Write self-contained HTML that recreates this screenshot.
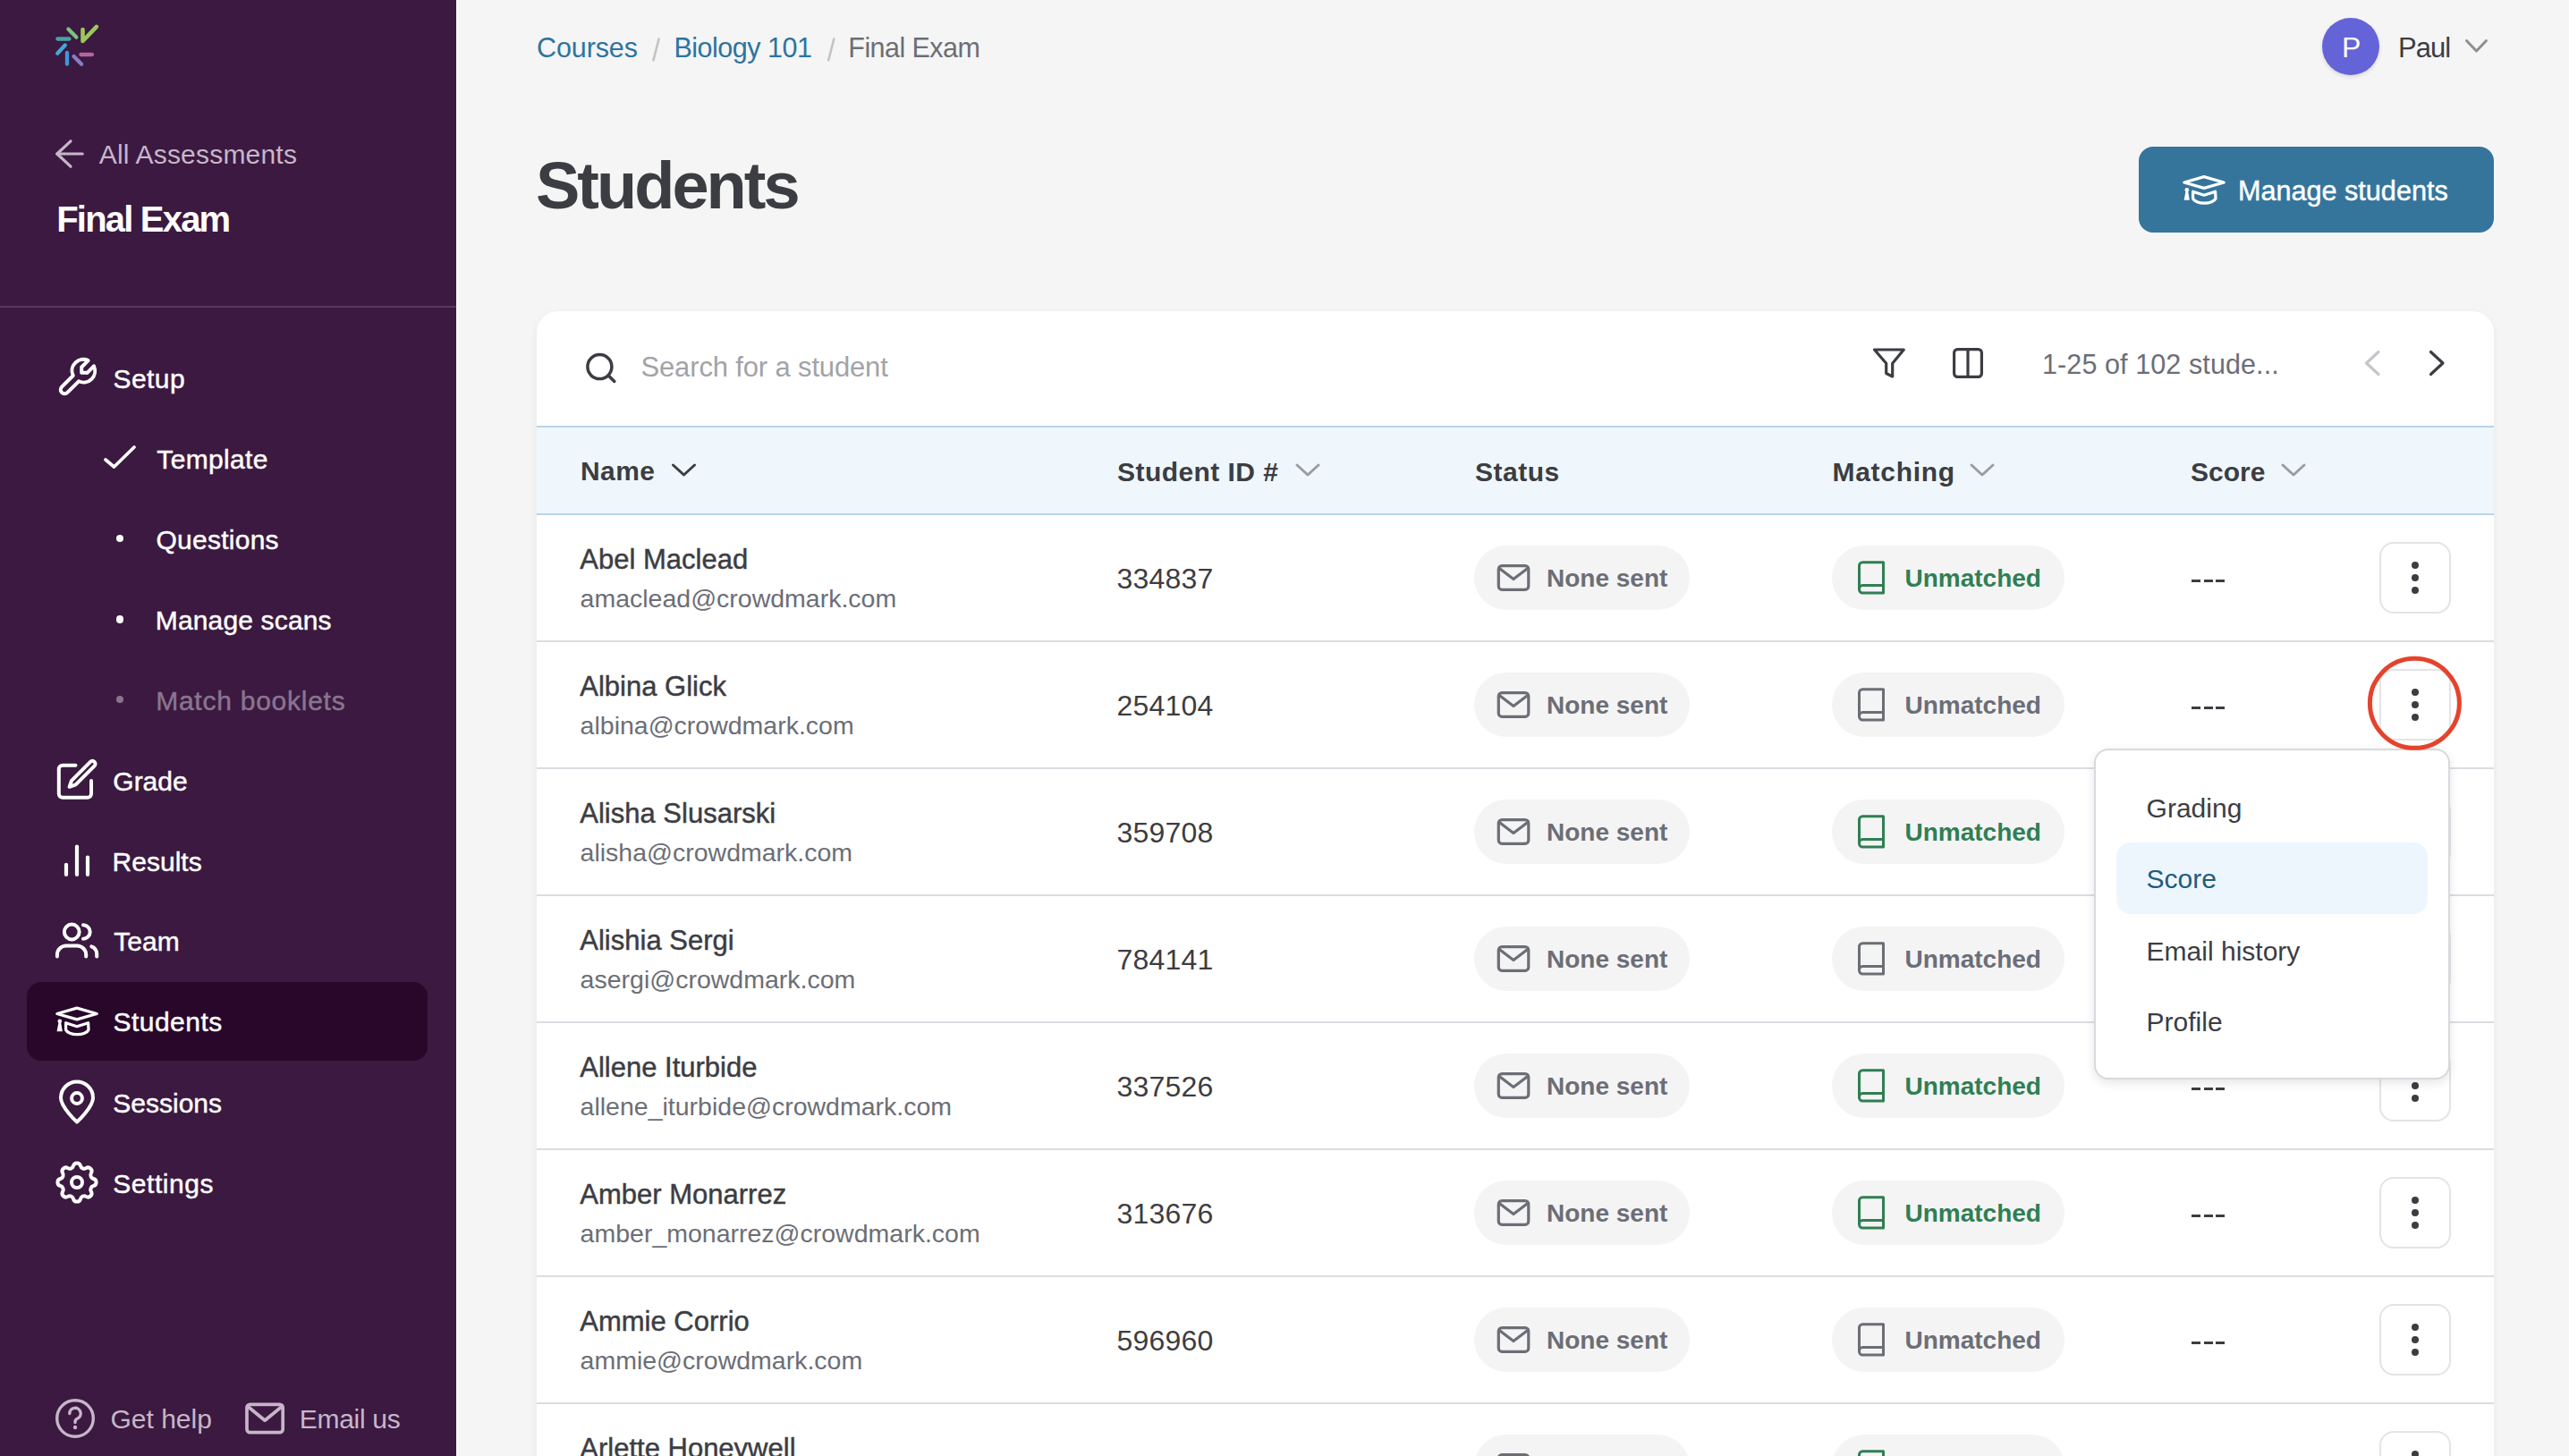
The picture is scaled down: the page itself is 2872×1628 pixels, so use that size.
<!DOCTYPE html>
<html><head><meta charset="utf-8">
<style>
*{margin:0;padding:0;box-sizing:border-box}
html,body{width:2872px;height:1628px;overflow:hidden;background:#f5f5f5;font-family:"Liberation Sans",sans-serif;color:#3c3d42}
.a{position:absolute;white-space:nowrap;line-height:1}
svg{position:absolute;overflow:visible}
.b{position:absolute}
</style></head><body>
<div class="b" style="left:0;top:0;width:510px;height:1628px;background:#3b1940"></div>
<svg style="left:0px;top:0px" width="200" height="100" viewBox="0 0 200 100" ><g stroke-linecap="round" fill="none" stroke-width="4.3">
<line x1="76.4" y1="32.5" x2="85.3" y2="41.6" stroke="#79c27c"/>
<polyline points="92.5,33 92.5,46 107.9,29.9" stroke="#9cc75a" stroke-linejoin="round" stroke-width="4.6"/>
<line x1="64.4" y1="43.5" x2="77.4" y2="43.5" stroke="#48a4a0"/>
<line x1="72.8" y1="50.5" x2="64.2" y2="59.7" stroke="#45a8d6"/>
<line x1="75" y1="59" x2="75" y2="71.7" stroke="#3f98da"/>
<line x1="82.5" y1="63" x2="91.1" y2="71.7" stroke="#8a7dc2"/>
<line x1="90.4" y1="61" x2="102.9" y2="61" stroke="#b564a2"/>
</g></svg>
<svg style="left:62px;top:156px" width="32" height="32" viewBox="0 0 32 32" ><g fill="none" stroke="#c7b6ca" stroke-width="3.2" stroke-linecap="round" stroke-linejoin="round"><polyline points="17,1.8 1.8,16 17,30.2"/><line x1="1.8" y1="16" x2="30.2" y2="16"/></g></svg>
<div class="a" style="left:110.7px;top:157.60px;font-size:30px;color:#c7b6ca;letter-spacing:0.2px;">All Assessments</div>
<div class="a" style="left:63.2px;top:225.14px;font-size:40px;color:#ffffff;font-weight:bold;letter-spacing:-1.8px;">Final Exam</div>
<div class="b" style="left:0;top:342px;width:510px;height:2px;background:#563a5b"></div>
<svg style="left:0px;top:0px" width="10" height="10" viewBox="0 0 10 10" ><g transform="translate(112.3,395.7) scale(-2.11,2.11)" fill="none" stroke="#ffffff" stroke-width="1.9" stroke-linecap="round" stroke-linejoin="round"><path d="M7 10h3v-3l-3.5 -3.5a6 6 0 0 1 8 8l6 6a2 2 0 0 1 -3 3l-6 -6a6 6 0 0 1 -8 -8l3.5 3.5"/></g></svg>
<div class="a" style="left:126.6px;top:408.61px;font-size:30px;color:#ffffff;letter-spacing:0.4px;-webkit-text-stroke:0.45px #ffffff;">Setup</div>
<svg style="left:116px;top:498px" width="36" height="26" viewBox="0 0 36 26" ><polyline points="2,16 11.5,24 34,2" fill="none" stroke="#ffffff" stroke-width="3.6" stroke-linecap="round" stroke-linejoin="round"/></svg>
<div class="a" style="left:175.3px;top:498.81px;font-size:30px;color:#ffffff;letter-spacing:0.35px;-webkit-text-stroke:0.45px #ffffff;">Template</div>
<div class="b" style="left:129.7px;top:597.9000000000001px;width:8.6px;height:8.6px;border-radius:50%;background:#ffffff"></div>
<div class="b" style="left:129.7px;top:688.1px;width:8.6px;height:8.6px;border-radius:50%;background:#ffffff"></div>
<div class="b" style="left:129.7px;top:777.9000000000001px;width:8.6px;height:8.6px;border-radius:50%;background:#8a7590"></div>
<div class="a" style="left:174.5px;top:588.61px;font-size:30px;color:#ffffff;letter-spacing:0.25px;-webkit-text-stroke:0.45px #ffffff;">Questions</div>
<div class="a" style="left:173.8px;top:678.81px;font-size:30px;color:#ffffff;letter-spacing:0.15px;-webkit-text-stroke:0.45px #ffffff;">Manage scans</div>
<div class="a" style="left:174.2px;top:768.61px;font-size:30px;color:#8a7590;letter-spacing:0.75px;-webkit-text-stroke:0.45px #8a7590;">Match booklets</div>
<svg style="left:0px;top:0px" width="10" height="10" viewBox="0 0 10 10" ><g fill="none" stroke="#ffffff" stroke-width="4" stroke-linecap="round" stroke-linejoin="round"><path d="M84.5 855.7H70a4.2 4.2 0 0 0-4.2 4.2V887.6a4.2 4.2 0 0 0 4.2 4.2H97.8a4.2 4.2 0 0 0 4.2-4.2V873"/><path d="M101 851.8a3.25 3.25 0 0 1 4.6 4.6L84.6 877.4L77.6 879.8L80 872.8Z"/></g></svg>
<div class="a" style="left:126.3px;top:858.61px;font-size:30px;color:#ffffff;-webkit-text-stroke:0.45px #ffffff;">Grade</div>
<svg style="left:0px;top:0px" width="10" height="10" viewBox="0 0 10 10" ><g fill="none" stroke="#ffffff" stroke-width="4.2" stroke-linecap="round"><line x1="74" y1="966.8" x2="74" y2="978"/><line x1="86" y1="946.5" x2="86" y2="978"/><line x1="98" y1="958.5" x2="98" y2="978"/></g></svg>
<div class="a" style="left:125.6px;top:948.81px;font-size:30px;color:#ffffff;-webkit-text-stroke:0.45px #ffffff;">Results</div>
<svg style="left:0px;top:0px" width="10" height="10" viewBox="0 0 10 10" ><g fill="none" stroke="#ffffff" stroke-width="4" stroke-linecap="round"><circle cx="80.25" cy="1042" r="8.4"/><path d="M93 1034.3a7.7 7.7 0 0 1 0 15.4"/><path d="M63.9 1069.6v-2a10 10 0 0 1 10-10h12.3a10 10 0 0 1 10 10v2"/><path d="M102.3 1058.3a9 9 0 0 1 5.9 8.3v3"/></g></svg>
<div class="a" style="left:127.3px;top:1038.20px;font-size:30px;color:#ffffff;-webkit-text-stroke:0.45px #ffffff;">Team</div>
<div class="b" style="left:30px;top:1098px;width:448px;height:88px;border-radius:16px;background:#28072b"></div>
<svg style="left:0px;top:0px" width="10" height="10" viewBox="0 0 10 10" ><g transform="translate(62,1125.5) scale(1.0)"><path d="M1.8 8L24 1.6L46.2 8L24 14.4Z" fill="none" stroke="#ffffff" stroke-width="3.2" stroke-linejoin="round"/><path d="M11.6 18.2L24 22.2L36.6 18.2L37 26A13 6.5 0 0 1 11.6 26Z" fill="none" stroke="#ffffff" stroke-width="3.2" stroke-linejoin="round"/><circle cx="4.8" cy="16.2" r="2.3" fill="#ffffff"/><path d="M3.6 17L6 17L7.8 27.8L1.6 27.8Z" fill="#ffffff"/></g></svg>
<div class="a" style="left:126.4px;top:1128.31px;font-size:30px;color:#ffffff;letter-spacing:0.5px;-webkit-text-stroke:0.45px #ffffff;">Students</div>
<svg style="left:0px;top:0px" width="10" height="10" viewBox="0 0 10 10" ><g fill="none" stroke="#ffffff" stroke-width="4" stroke-linejoin="round"><path d="M86 1254.5C86 1254.5 68 1238 68 1227.5a18 18 0 0 1 36 0C104 1238 86 1254.5 86 1254.5Z"/><circle cx="86" cy="1228" r="5.9"/></g></svg>
<div class="a" style="left:126.3px;top:1218.61px;font-size:30px;color:#ffffff;-webkit-text-stroke:0.45px #ffffff;">Sessions</div>
<svg style="left:0px;top:0px" width="10" height="10" viewBox="0 0 10 10" ><g transform="translate(57.2,1293.2) scale(2.4)" fill="none" stroke="#ffffff" stroke-width="1.67" stroke-linecap="round" stroke-linejoin="round"><path d="M10.325 4.317c.426 -1.756 2.924 -1.756 3.35 0a1.724 1.724 0 0 0 2.573 1.066c1.543 -.94 3.31 .826 2.37 2.37a1.724 1.724 0 0 0 1.065 2.572c1.756 .426 1.756 2.924 0 3.35a1.724 1.724 0 0 0 -1.066 2.573c.94 1.543 -.826 3.31 -2.37 2.37a1.724 1.724 0 0 0 -2.572 1.065c-.426 1.756 -2.924 1.756 -3.35 0a1.724 1.724 0 0 0 -2.573 -1.066c-1.543 .94 -3.31 -.826 -2.37 -2.37a1.724 1.724 0 0 0 -1.065 -2.572c-1.756 -.426 -1.756 -2.924 0 -3.35a1.724 1.724 0 0 0 1.066 -2.573c-.94 -1.543 .826 -3.31 2.37 -2.37c1 .608 2.296 .07 2.572 -1.065z"/><circle cx="12" cy="12" r="2.5"/></g></svg>
<div class="a" style="left:126.3px;top:1308.81px;font-size:30px;color:#ffffff;letter-spacing:0.55px;-webkit-text-stroke:0.45px #ffffff;">Settings</div>
<svg style="left:0px;top:0px" width="10" height="10" viewBox="0 0 10 10" ><g fill="none" stroke="#c7b6ca" stroke-width="3.4" stroke-linecap="round"><circle cx="84" cy="1586" r="20.3"/><path d="M77.8 1580.5a6.2 6.2 0 1 1 8.6 5.7c-1.6.8-2.4 1.8-2.4 3.4v0.9"/></g><circle cx="84" cy="1596" r="2.2" fill="#c7b6ca"/></svg>
<div class="a" style="left:123.5px;top:1572.40px;font-size:30px;color:#c7b6ca;">Get help</div>
<svg style="left:0px;top:0px" width="10" height="10" viewBox="0 0 10 10" ><g fill="none" stroke="#c7b6ca" stroke-width="3.7" stroke-linejoin="round" stroke-linecap="round"><rect x="276" y="1570.3" width="40.2" height="31.4" rx="3.5"/><polyline points="277.5,1573 296.1,1588.2 314.7,1573"/></g></svg>
<div class="a" style="left:334.8px;top:1572.40px;font-size:30px;color:#c7b6ca;letter-spacing:-0.3px;">Email us</div>
<div class="a" style="left:600px;top:38.18px;font-size:30.5px;color:#2d74a0;letter-spacing:-0.1px;">Courses</div>
<svg style="left:0px;top:0px" width="10" height="10" viewBox="0 0 10 10" ><line x1="736.6" y1="43.5" x2="730.5" y2="67.3" stroke="#c2c3c7" stroke-width="2.6" stroke-linecap="round"/></svg>
<div class="a" style="left:753.5px;top:38.18px;font-size:30.5px;color:#2d74a0;letter-spacing:-0.5px;">Biology 101</div>
<svg style="left:0px;top:0px" width="10" height="10" viewBox="0 0 10 10" ><line x1="932.3" y1="43.5" x2="926.2" y2="67.3" stroke="#c2c3c7" stroke-width="2.6" stroke-linecap="round"/></svg>
<div class="a" style="left:948.3px;top:38.18px;font-size:30.5px;color:#6c6e76;letter-spacing:-0.55px;">Final Exam</div>
<div class="a" style="left:599px;top:170.86px;font-size:74px;color:#3c3d42;font-weight:bold;letter-spacing:-3px;">Students</div>
<div class="b" style="left:2596px;top:20px;width:64px;height:64px;border-radius:50%;background:#6464d8;box-shadow:0 2px 4px rgba(0,0,0,0.12)"></div>
<div class="a" style="left:2618px;top:36.91px;font-size:32px;color:#ffffff;">P</div>
<div class="a" style="left:2681px;top:38.36px;font-size:31px;color:#3c3d42;letter-spacing:-1px;">Paul</div>
<svg style="left:2756px;top:44px" width="26" height="16" viewBox="0 0 26 16" ><polyline points="1.5,1.5 12.5,13 23.5,1.5" fill="none" stroke="#8e8f94" stroke-width="3" stroke-linecap="round" stroke-linejoin="round"/></svg>
<div class="b" style="left:2391px;top:164px;width:397px;height:96px;border-radius:16px;background:#35759c"></div>
<svg style="left:0px;top:0px" width="10" height="10" viewBox="0 0 10 10" ><g transform="translate(2440,196) scale(1.0)"><path d="M1.8 8L24 1.6L46.2 8L24 14.4Z" fill="none" stroke="#ffffff" stroke-width="3.2" stroke-linejoin="round"/><path d="M11.6 18.2L24 22.2L36.6 18.2L37 26A13 6.5 0 0 1 11.6 26Z" fill="none" stroke="#ffffff" stroke-width="3.2" stroke-linejoin="round"/><circle cx="4.8" cy="16.2" r="2.3" fill="#ffffff"/><path d="M3.6 17L6 17L7.8 27.8L1.6 27.8Z" fill="#ffffff"/></g></svg>
<div class="a" style="left:2502px;top:198.10px;font-size:30.6px;color:#ffffff;-webkit-text-stroke:0.45px #ffffff;">Manage students</div>
<div class="b" style="left:600px;top:348px;width:2188px;height:1400px;border-radius:24px;background:#fff;box-shadow:0 3px 10px rgba(0,0,0,0.06)"></div>
<svg style="left:0px;top:0px" width="10" height="10" viewBox="0 0 10 10" ><g fill="none" stroke="#3c3d42" stroke-width="3.5" stroke-linecap="round"><circle cx="670.4" cy="410.1" r="13.5"/><line x1="680.3" y1="420" x2="686.8" y2="426.5"/></g></svg>
<div class="a" style="left:716.5px;top:395.46px;font-size:31px;color:#a2a3a7;letter-spacing:-0.15px;">Search for a student</div>
<svg style="left:0px;top:0px" width="10" height="10" viewBox="0 0 10 10" ><path d="M2095.5 391L2128.3 391L2115.7 406.2L2115.7 421L2108.7 417.5L2108.7 406.2Z" fill="none" stroke="#3c3d42" stroke-width="3.2" stroke-linejoin="round"/></svg>
<svg style="left:0px;top:0px" width="10" height="10" viewBox="0 0 10 10" ><g fill="none" stroke="#3c3d42" stroke-width="3.2"><rect x="2184.6" y="390.6" width="30.8" height="30.8" rx="3.8"/><line x1="2200" y1="391" x2="2200" y2="421"/></g></svg>
<div class="a" style="left:2283px;top:392.48px;font-size:30.5px;color:#6c6e76;letter-spacing:0.1px;">1-25 of 102 stude...</div>
<svg style="left:0px;top:0px" width="10" height="10" viewBox="0 0 10 10" ><polyline points="2659,393.5 2645.5,406 2659,418.5" fill="none" stroke="#c5c6ca" stroke-width="3.2" stroke-linecap="round" stroke-linejoin="round"/></svg>
<svg style="left:0px;top:0px" width="10" height="10" viewBox="0 0 10 10" ><polyline points="2717.5,393.5 2731,406 2717.5,418.5" fill="none" stroke="#3c3d42" stroke-width="3.2" stroke-linecap="round" stroke-linejoin="round"/></svg>
<div class="b" style="left:600px;top:476px;width:2188px;height:100px;background:#eff7fd;border-top:2px solid #b7d6e7;border-bottom:2px solid #b7d6e7"></div>
<div class="a" style="left:649px;top:512.40px;font-size:30px;color:#3c3d42;font-weight:bold;letter-spacing:0.4px;">Name</div>
<svg style="left:0px;top:0px" width="10" height="10" viewBox="0 0 10 10" ><polyline points="752.5,520.0 764.5,531.0 776.5,520.0" fill="none" stroke="#3c3d42" stroke-width="3" stroke-linecap="round" stroke-linejoin="round"/></svg>
<div class="a" style="left:1249px;top:512.61px;font-size:30px;color:#3c3d42;font-weight:bold;letter-spacing:0.45px;">Student ID #</div>
<svg style="left:0px;top:0px" width="10" height="10" viewBox="0 0 10 10" ><polyline points="1450.0,520.0 1462.0,531.0 1474.0,520.0" fill="none" stroke="#9b9ca0" stroke-width="3" stroke-linecap="round" stroke-linejoin="round"/></svg>
<div class="a" style="left:1649px;top:512.61px;font-size:30px;color:#3c3d42;font-weight:bold;letter-spacing:0.5px;">Status</div>
<div class="a" style="left:2048.5px;top:512.61px;font-size:30px;color:#3c3d42;font-weight:bold;letter-spacing:0.7px;">Matching</div>
<svg style="left:0px;top:0px" width="10" height="10" viewBox="0 0 10 10" ><polyline points="2204.0,520.0 2216.0,531.0 2228.0,520.0" fill="none" stroke="#9b9ca0" stroke-width="3" stroke-linecap="round" stroke-linejoin="round"/></svg>
<div class="a" style="left:2449px;top:512.61px;font-size:30px;color:#3c3d42;font-weight:bold;">Score</div>
<svg style="left:0px;top:0px" width="10" height="10" viewBox="0 0 10 10" ><polyline points="2552.0,520.0 2564.0,531.0 2576.0,520.0" fill="none" stroke="#9b9ca0" stroke-width="3" stroke-linecap="round" stroke-linejoin="round"/></svg>
<div class="b" style="left:600px;top:716px;width:2188px;height:2px;background:#dcdde2"></div>
<div class="a" style="left:648.3px;top:609.56px;font-size:31px;color:#3c3d42;-webkit-text-stroke:0.45px #3c3d42;">Abel Maclead</div>
<div class="a" style="left:648.6px;top:655.37px;font-size:28.5px;color:#6c6e76;">amaclead@crowdmark.com</div>
<div class="a" style="left:1248.5px;top:630.91px;font-size:32px;color:#3c3d42;letter-spacing:0.2px;">334837</div>
<div class="b" style="left:1648px;top:610px;width:241px;height:72px;border-radius:36px;background:#f4f4f5"></div>
<svg style="left:0px;top:0px" width="10" height="10" viewBox="0 0 10 10" ><g fill="none" stroke="#6c6e76" stroke-width="3.2" stroke-linejoin="round"><rect x="1675.3" y="632.6" width="33.5" height="26.7" rx="3.8"/><polyline points="1676.2,635.6 1692,647.6 1707.8,635.6"/></g></svg>
<div class="a" style="left:1729px;top:632.50px;font-size:28px;color:#6c6e76;font-weight:bold;">None sent</div>
<div class="b" style="left:2048px;top:610px;width:260px;height:72px;border-radius:36px;background:#f4f4f5"></div>
<svg style="left:0px;top:0px" width="10" height="10" viewBox="0 0 10 10" ><g fill="none" stroke="#2f7f52" stroke-width="3" stroke-linejoin="round"><path d="M2105.5 628.7H2082.3a3.8 3.8 0 0 0 -3.8 3.8V659.3a3.8 3.8 0 0 0 3.8 3.8H2105.5Z"/><path d="M2078.5 658.3a3.8 3.8 0 0 1 3.8 -3.8H2105.5"/></g></svg>
<div class="a" style="left:2129.5px;top:632.50px;font-size:28px;color:#2f7f52;font-weight:bold;">Unmatched</div>
<div class="b" style="left:2450px;top:648px;width:10px;height:2.8px;background:#3c3d42"></div>
<div class="b" style="left:2463.5px;top:648px;width:10px;height:2.8px;background:#3c3d42"></div>
<div class="b" style="left:2477px;top:648px;width:10px;height:2.8px;background:#3c3d42"></div>
<div class="b" style="left:2660px;top:606px;width:80px;height:80px;border:2px solid #e4e4e7;border-radius:16px;background:#fff"></div>
<div class="b" style="left:2695.8px;top:627.8px;width:8.4px;height:8.4px;border-radius:50%;background:#3c3d42"></div>
<div class="b" style="left:2695.8px;top:641.8px;width:8.4px;height:8.4px;border-radius:50%;background:#3c3d42"></div>
<div class="b" style="left:2695.8px;top:655.8px;width:8.4px;height:8.4px;border-radius:50%;background:#3c3d42"></div>
<div class="b" style="left:600px;top:858px;width:2188px;height:2px;background:#dcdde2"></div>
<div class="a" style="left:648.3px;top:751.56px;font-size:31px;color:#3c3d42;-webkit-text-stroke:0.45px #3c3d42;">Albina Glick</div>
<div class="a" style="left:648.6px;top:797.37px;font-size:28.5px;color:#6c6e76;">albina@crowdmark.com</div>
<div class="a" style="left:1248.5px;top:772.91px;font-size:32px;color:#3c3d42;letter-spacing:0.2px;">254104</div>
<div class="b" style="left:1648px;top:752px;width:241px;height:72px;border-radius:36px;background:#f4f4f5"></div>
<svg style="left:0px;top:0px" width="10" height="10" viewBox="0 0 10 10" ><g fill="none" stroke="#6c6e76" stroke-width="3.2" stroke-linejoin="round"><rect x="1675.3" y="774.6" width="33.5" height="26.7" rx="3.8"/><polyline points="1676.2,777.6 1692,789.6 1707.8,777.6"/></g></svg>
<div class="a" style="left:1729px;top:774.50px;font-size:28px;color:#6c6e76;font-weight:bold;">None sent</div>
<div class="b" style="left:2048px;top:752px;width:260px;height:72px;border-radius:36px;background:#f4f4f5"></div>
<svg style="left:0px;top:0px" width="10" height="10" viewBox="0 0 10 10" ><g fill="none" stroke="#6c6e76" stroke-width="3" stroke-linejoin="round"><path d="M2105.5 770.7H2082.3a3.8 3.8 0 0 0 -3.8 3.8V801.3a3.8 3.8 0 0 0 3.8 3.8H2105.5Z"/><path d="M2078.5 800.3a3.8 3.8 0 0 1 3.8 -3.8H2105.5"/></g></svg>
<div class="a" style="left:2129.5px;top:774.50px;font-size:28px;color:#6c6e76;font-weight:bold;">Unmatched</div>
<div class="b" style="left:2450px;top:790px;width:10px;height:2.8px;background:#3c3d42"></div>
<div class="b" style="left:2463.5px;top:790px;width:10px;height:2.8px;background:#3c3d42"></div>
<div class="b" style="left:2477px;top:790px;width:10px;height:2.8px;background:#3c3d42"></div>
<div class="b" style="left:2660px;top:748px;width:80px;height:80px;border:2px solid #e4e4e7;border-radius:16px;background:#fff"></div>
<div class="b" style="left:2695.8px;top:769.8px;width:8.4px;height:8.4px;border-radius:50%;background:#3c3d42"></div>
<div class="b" style="left:2695.8px;top:783.8px;width:8.4px;height:8.4px;border-radius:50%;background:#3c3d42"></div>
<div class="b" style="left:2695.8px;top:797.8px;width:8.4px;height:8.4px;border-radius:50%;background:#3c3d42"></div>
<div class="b" style="left:600px;top:1000px;width:2188px;height:2px;background:#dcdde2"></div>
<div class="a" style="left:648.3px;top:893.56px;font-size:31px;color:#3c3d42;-webkit-text-stroke:0.45px #3c3d42;">Alisha Slusarski</div>
<div class="a" style="left:648.6px;top:939.37px;font-size:28.5px;color:#6c6e76;">alisha@crowdmark.com</div>
<div class="a" style="left:1248.5px;top:914.91px;font-size:32px;color:#3c3d42;letter-spacing:0.2px;">359708</div>
<div class="b" style="left:1648px;top:894px;width:241px;height:72px;border-radius:36px;background:#f4f4f5"></div>
<svg style="left:0px;top:0px" width="10" height="10" viewBox="0 0 10 10" ><g fill="none" stroke="#6c6e76" stroke-width="3.2" stroke-linejoin="round"><rect x="1675.3" y="916.6" width="33.5" height="26.7" rx="3.8"/><polyline points="1676.2,919.6 1692,931.6 1707.8,919.6"/></g></svg>
<div class="a" style="left:1729px;top:916.50px;font-size:28px;color:#6c6e76;font-weight:bold;">None sent</div>
<div class="b" style="left:2048px;top:894px;width:260px;height:72px;border-radius:36px;background:#f4f4f5"></div>
<svg style="left:0px;top:0px" width="10" height="10" viewBox="0 0 10 10" ><g fill="none" stroke="#2f7f52" stroke-width="3" stroke-linejoin="round"><path d="M2105.5 912.7H2082.3a3.8 3.8 0 0 0 -3.8 3.8V943.3a3.8 3.8 0 0 0 3.8 3.8H2105.5Z"/><path d="M2078.5 942.3a3.8 3.8 0 0 1 3.8 -3.8H2105.5"/></g></svg>
<div class="a" style="left:2129.5px;top:916.50px;font-size:28px;color:#2f7f52;font-weight:bold;">Unmatched</div>
<div class="b" style="left:2450px;top:932px;width:10px;height:2.8px;background:#3c3d42"></div>
<div class="b" style="left:2463.5px;top:932px;width:10px;height:2.8px;background:#3c3d42"></div>
<div class="b" style="left:2477px;top:932px;width:10px;height:2.8px;background:#3c3d42"></div>
<div class="b" style="left:2660px;top:890px;width:80px;height:80px;border:2px solid #e4e4e7;border-radius:16px;background:#fff"></div>
<div class="b" style="left:2695.8px;top:911.8px;width:8.4px;height:8.4px;border-radius:50%;background:#3c3d42"></div>
<div class="b" style="left:2695.8px;top:925.8px;width:8.4px;height:8.4px;border-radius:50%;background:#3c3d42"></div>
<div class="b" style="left:2695.8px;top:939.8px;width:8.4px;height:8.4px;border-radius:50%;background:#3c3d42"></div>
<div class="b" style="left:600px;top:1142px;width:2188px;height:2px;background:#dcdde2"></div>
<div class="a" style="left:648.3px;top:1035.56px;font-size:31px;color:#3c3d42;-webkit-text-stroke:0.45px #3c3d42;">Alishia Sergi</div>
<div class="a" style="left:648.6px;top:1081.37px;font-size:28.5px;color:#6c6e76;">asergi@crowdmark.com</div>
<div class="a" style="left:1248.5px;top:1056.91px;font-size:32px;color:#3c3d42;letter-spacing:0.2px;">784141</div>
<div class="b" style="left:1648px;top:1036px;width:241px;height:72px;border-radius:36px;background:#f4f4f5"></div>
<svg style="left:0px;top:0px" width="10" height="10" viewBox="0 0 10 10" ><g fill="none" stroke="#6c6e76" stroke-width="3.2" stroke-linejoin="round"><rect x="1675.3" y="1058.6" width="33.5" height="26.7" rx="3.8"/><polyline points="1676.2,1061.6 1692,1073.6 1707.8,1061.6"/></g></svg>
<div class="a" style="left:1729px;top:1058.50px;font-size:28px;color:#6c6e76;font-weight:bold;">None sent</div>
<div class="b" style="left:2048px;top:1036px;width:260px;height:72px;border-radius:36px;background:#f4f4f5"></div>
<svg style="left:0px;top:0px" width="10" height="10" viewBox="0 0 10 10" ><g fill="none" stroke="#6c6e76" stroke-width="3" stroke-linejoin="round"><path d="M2105.5 1054.7H2082.3a3.8 3.8 0 0 0 -3.8 3.8V1085.3a3.8 3.8 0 0 0 3.8 3.8H2105.5Z"/><path d="M2078.5 1084.3a3.8 3.8 0 0 1 3.8 -3.8H2105.5"/></g></svg>
<div class="a" style="left:2129.5px;top:1058.50px;font-size:28px;color:#6c6e76;font-weight:bold;">Unmatched</div>
<div class="b" style="left:2450px;top:1074px;width:10px;height:2.8px;background:#3c3d42"></div>
<div class="b" style="left:2463.5px;top:1074px;width:10px;height:2.8px;background:#3c3d42"></div>
<div class="b" style="left:2477px;top:1074px;width:10px;height:2.8px;background:#3c3d42"></div>
<div class="b" style="left:2660px;top:1032px;width:80px;height:80px;border:2px solid #e4e4e7;border-radius:16px;background:#fff"></div>
<div class="b" style="left:2695.8px;top:1053.8px;width:8.4px;height:8.4px;border-radius:50%;background:#3c3d42"></div>
<div class="b" style="left:2695.8px;top:1067.8px;width:8.4px;height:8.4px;border-radius:50%;background:#3c3d42"></div>
<div class="b" style="left:2695.8px;top:1081.8px;width:8.4px;height:8.4px;border-radius:50%;background:#3c3d42"></div>
<div class="b" style="left:600px;top:1284px;width:2188px;height:2px;background:#dcdde2"></div>
<div class="a" style="left:648.3px;top:1177.56px;font-size:31px;color:#3c3d42;-webkit-text-stroke:0.45px #3c3d42;">Allene Iturbide</div>
<div class="a" style="left:648.6px;top:1223.37px;font-size:28.5px;color:#6c6e76;">allene_iturbide@crowdmark.com</div>
<div class="a" style="left:1248.5px;top:1198.91px;font-size:32px;color:#3c3d42;letter-spacing:0.2px;">337526</div>
<div class="b" style="left:1648px;top:1178px;width:241px;height:72px;border-radius:36px;background:#f4f4f5"></div>
<svg style="left:0px;top:0px" width="10" height="10" viewBox="0 0 10 10" ><g fill="none" stroke="#6c6e76" stroke-width="3.2" stroke-linejoin="round"><rect x="1675.3" y="1200.6" width="33.5" height="26.7" rx="3.8"/><polyline points="1676.2,1203.6 1692,1215.6 1707.8,1203.6"/></g></svg>
<div class="a" style="left:1729px;top:1200.50px;font-size:28px;color:#6c6e76;font-weight:bold;">None sent</div>
<div class="b" style="left:2048px;top:1178px;width:260px;height:72px;border-radius:36px;background:#f4f4f5"></div>
<svg style="left:0px;top:0px" width="10" height="10" viewBox="0 0 10 10" ><g fill="none" stroke="#2f7f52" stroke-width="3" stroke-linejoin="round"><path d="M2105.5 1196.7H2082.3a3.8 3.8 0 0 0 -3.8 3.8V1227.3a3.8 3.8 0 0 0 3.8 3.8H2105.5Z"/><path d="M2078.5 1226.3a3.8 3.8 0 0 1 3.8 -3.8H2105.5"/></g></svg>
<div class="a" style="left:2129.5px;top:1200.50px;font-size:28px;color:#2f7f52;font-weight:bold;">Unmatched</div>
<div class="b" style="left:2450px;top:1216px;width:10px;height:2.8px;background:#3c3d42"></div>
<div class="b" style="left:2463.5px;top:1216px;width:10px;height:2.8px;background:#3c3d42"></div>
<div class="b" style="left:2477px;top:1216px;width:10px;height:2.8px;background:#3c3d42"></div>
<div class="b" style="left:2660px;top:1174px;width:80px;height:80px;border:2px solid #e4e4e7;border-radius:16px;background:#fff"></div>
<div class="b" style="left:2695.8px;top:1195.8px;width:8.4px;height:8.4px;border-radius:50%;background:#3c3d42"></div>
<div class="b" style="left:2695.8px;top:1209.8px;width:8.4px;height:8.4px;border-radius:50%;background:#3c3d42"></div>
<div class="b" style="left:2695.8px;top:1223.8px;width:8.4px;height:8.4px;border-radius:50%;background:#3c3d42"></div>
<div class="b" style="left:600px;top:1426px;width:2188px;height:2px;background:#dcdde2"></div>
<div class="a" style="left:648.3px;top:1319.56px;font-size:31px;color:#3c3d42;-webkit-text-stroke:0.45px #3c3d42;">Amber Monarrez</div>
<div class="a" style="left:648.6px;top:1365.37px;font-size:28.5px;color:#6c6e76;">amber_monarrez@crowdmark.com</div>
<div class="a" style="left:1248.5px;top:1340.91px;font-size:32px;color:#3c3d42;letter-spacing:0.2px;">313676</div>
<div class="b" style="left:1648px;top:1320px;width:241px;height:72px;border-radius:36px;background:#f4f4f5"></div>
<svg style="left:0px;top:0px" width="10" height="10" viewBox="0 0 10 10" ><g fill="none" stroke="#6c6e76" stroke-width="3.2" stroke-linejoin="round"><rect x="1675.3" y="1342.6" width="33.5" height="26.7" rx="3.8"/><polyline points="1676.2,1345.6 1692,1357.6 1707.8,1345.6"/></g></svg>
<div class="a" style="left:1729px;top:1342.50px;font-size:28px;color:#6c6e76;font-weight:bold;">None sent</div>
<div class="b" style="left:2048px;top:1320px;width:260px;height:72px;border-radius:36px;background:#f4f4f5"></div>
<svg style="left:0px;top:0px" width="10" height="10" viewBox="0 0 10 10" ><g fill="none" stroke="#2f7f52" stroke-width="3" stroke-linejoin="round"><path d="M2105.5 1338.7H2082.3a3.8 3.8 0 0 0 -3.8 3.8V1369.3a3.8 3.8 0 0 0 3.8 3.8H2105.5Z"/><path d="M2078.5 1368.3a3.8 3.8 0 0 1 3.8 -3.8H2105.5"/></g></svg>
<div class="a" style="left:2129.5px;top:1342.50px;font-size:28px;color:#2f7f52;font-weight:bold;">Unmatched</div>
<div class="b" style="left:2450px;top:1358px;width:10px;height:2.8px;background:#3c3d42"></div>
<div class="b" style="left:2463.5px;top:1358px;width:10px;height:2.8px;background:#3c3d42"></div>
<div class="b" style="left:2477px;top:1358px;width:10px;height:2.8px;background:#3c3d42"></div>
<div class="b" style="left:2660px;top:1316px;width:80px;height:80px;border:2px solid #e4e4e7;border-radius:16px;background:#fff"></div>
<div class="b" style="left:2695.8px;top:1337.8px;width:8.4px;height:8.4px;border-radius:50%;background:#3c3d42"></div>
<div class="b" style="left:2695.8px;top:1351.8px;width:8.4px;height:8.4px;border-radius:50%;background:#3c3d42"></div>
<div class="b" style="left:2695.8px;top:1365.8px;width:8.4px;height:8.4px;border-radius:50%;background:#3c3d42"></div>
<div class="b" style="left:600px;top:1568px;width:2188px;height:2px;background:#dcdde2"></div>
<div class="a" style="left:648.3px;top:1461.56px;font-size:31px;color:#3c3d42;-webkit-text-stroke:0.45px #3c3d42;">Ammie Corrio</div>
<div class="a" style="left:648.6px;top:1507.37px;font-size:28.5px;color:#6c6e76;">ammie@crowdmark.com</div>
<div class="a" style="left:1248.5px;top:1482.91px;font-size:32px;color:#3c3d42;letter-spacing:0.2px;">596960</div>
<div class="b" style="left:1648px;top:1462px;width:241px;height:72px;border-radius:36px;background:#f4f4f5"></div>
<svg style="left:0px;top:0px" width="10" height="10" viewBox="0 0 10 10" ><g fill="none" stroke="#6c6e76" stroke-width="3.2" stroke-linejoin="round"><rect x="1675.3" y="1484.6" width="33.5" height="26.7" rx="3.8"/><polyline points="1676.2,1487.6 1692,1499.6 1707.8,1487.6"/></g></svg>
<div class="a" style="left:1729px;top:1484.50px;font-size:28px;color:#6c6e76;font-weight:bold;">None sent</div>
<div class="b" style="left:2048px;top:1462px;width:260px;height:72px;border-radius:36px;background:#f4f4f5"></div>
<svg style="left:0px;top:0px" width="10" height="10" viewBox="0 0 10 10" ><g fill="none" stroke="#6c6e76" stroke-width="3" stroke-linejoin="round"><path d="M2105.5 1480.7H2082.3a3.8 3.8 0 0 0 -3.8 3.8V1511.3a3.8 3.8 0 0 0 3.8 3.8H2105.5Z"/><path d="M2078.5 1510.3a3.8 3.8 0 0 1 3.8 -3.8H2105.5"/></g></svg>
<div class="a" style="left:2129.5px;top:1484.50px;font-size:28px;color:#6c6e76;font-weight:bold;">Unmatched</div>
<div class="b" style="left:2450px;top:1500px;width:10px;height:2.8px;background:#3c3d42"></div>
<div class="b" style="left:2463.5px;top:1500px;width:10px;height:2.8px;background:#3c3d42"></div>
<div class="b" style="left:2477px;top:1500px;width:10px;height:2.8px;background:#3c3d42"></div>
<div class="b" style="left:2660px;top:1458px;width:80px;height:80px;border:2px solid #e4e4e7;border-radius:16px;background:#fff"></div>
<div class="b" style="left:2695.8px;top:1479.8px;width:8.4px;height:8.4px;border-radius:50%;background:#3c3d42"></div>
<div class="b" style="left:2695.8px;top:1493.8px;width:8.4px;height:8.4px;border-radius:50%;background:#3c3d42"></div>
<div class="b" style="left:2695.8px;top:1507.8px;width:8.4px;height:8.4px;border-radius:50%;background:#3c3d42"></div>
<div class="a" style="left:648.3px;top:1603.56px;font-size:31px;color:#3c3d42;-webkit-text-stroke:0.45px #3c3d42;">Arlette Honeywell</div>
<div class="a" style="left:648.6px;top:1649.37px;font-size:28.5px;color:#6c6e76;">arlette@crowdmark.com</div>
<div class="a" style="left:1248.5px;top:1624.91px;font-size:32px;color:#3c3d42;letter-spacing:0.2px;">123456</div>
<div class="b" style="left:1648px;top:1604px;width:241px;height:72px;border-radius:36px;background:#f4f4f5"></div>
<svg style="left:0px;top:0px" width="10" height="10" viewBox="0 0 10 10" ><g fill="none" stroke="#6c6e76" stroke-width="3.2" stroke-linejoin="round"><rect x="1675.3" y="1626.6" width="33.5" height="26.7" rx="3.8"/><polyline points="1676.2,1629.6 1692,1641.6 1707.8,1629.6"/></g></svg>
<div class="a" style="left:1729px;top:1626.50px;font-size:28px;color:#6c6e76;font-weight:bold;">None sent</div>
<div class="b" style="left:2048px;top:1604px;width:260px;height:72px;border-radius:36px;background:#f4f4f5"></div>
<svg style="left:0px;top:0px" width="10" height="10" viewBox="0 0 10 10" ><g fill="none" stroke="#2f7f52" stroke-width="3" stroke-linejoin="round"><path d="M2105.5 1622.7H2082.3a3.8 3.8 0 0 0 -3.8 3.8V1653.3a3.8 3.8 0 0 0 3.8 3.8H2105.5Z"/><path d="M2078.5 1652.3a3.8 3.8 0 0 1 3.8 -3.8H2105.5"/></g></svg>
<div class="a" style="left:2129.5px;top:1626.50px;font-size:28px;color:#2f7f52;font-weight:bold;">Unmatched</div>
<div class="b" style="left:2450px;top:1642px;width:10px;height:2.8px;background:#3c3d42"></div>
<div class="b" style="left:2463.5px;top:1642px;width:10px;height:2.8px;background:#3c3d42"></div>
<div class="b" style="left:2477px;top:1642px;width:10px;height:2.8px;background:#3c3d42"></div>
<div class="b" style="left:2660px;top:1600px;width:80px;height:80px;border:2px solid #e4e4e7;border-radius:16px;background:#fff"></div>
<div class="b" style="left:2695.8px;top:1621.8px;width:8.4px;height:8.4px;border-radius:50%;background:#3c3d42"></div>
<div class="b" style="left:2695.8px;top:1635.8px;width:8.4px;height:8.4px;border-radius:50%;background:#3c3d42"></div>
<div class="b" style="left:2695.8px;top:1649.8px;width:8.4px;height:8.4px;border-radius:50%;background:#3c3d42"></div>
<div class="b" style="left:2341px;top:837px;width:398px;height:370px;border-radius:16px;background:#fff;border:2px solid #d8d9de;box-shadow:0 4px 12px rgba(0,0,0,0.10)"></div>
<div class="b" style="left:2366px;top:942px;width:348px;height:80px;border-radius:16px;background:#eef6fd"></div>
<div class="a" style="left:2399.6px;top:889.40px;font-size:30px;color:#3c3d42;">Grading</div>
<div class="a" style="left:2399.6px;top:968.21px;font-size:30px;color:#1f5c80;">Score</div>
<div class="a" style="left:2399.6px;top:1048.61px;font-size:30px;color:#3c3d42;">Email history</div>
<div class="a" style="left:2399.6px;top:1128.31px;font-size:30px;color:#3c3d42;">Profile</div>
<svg style="left:0px;top:0px" width="10" height="10" viewBox="0 0 10 10" ><circle cx="2699.4" cy="786.3" r="50" fill="none" stroke="#e5432b" stroke-width="5"/></svg>
</body></html>
